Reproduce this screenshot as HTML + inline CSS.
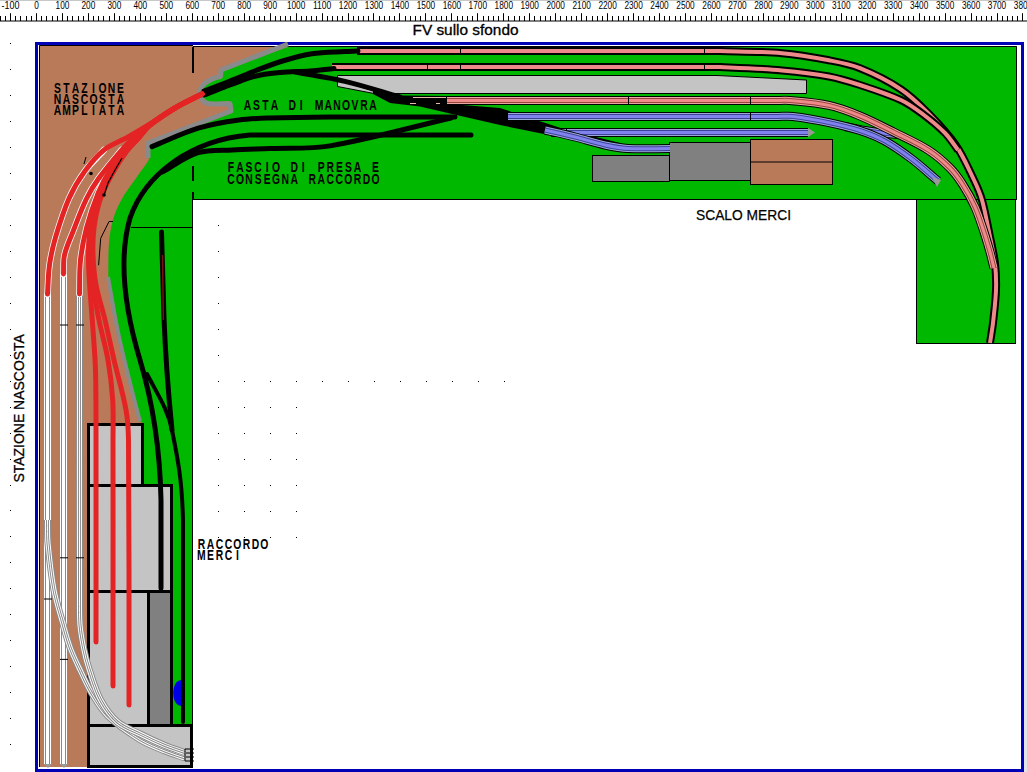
<!DOCTYPE html>
<html><head><meta charset="utf-8">
<style>
html,body{margin:0;padding:0;background:#fff;}
body{width:1027px;height:772px;overflow:hidden;position:relative;}
svg{position:absolute;left:0;top:0;}
text{font-family:"Liberation Sans",sans-serif;}
.rl{font-size:11px;fill:#000;}
.st{font-family:"Liberation Mono",monospace;font-size:13px;font-weight:bold;fill:#000;}
.fv{font-size:14px;fill:#000;}
.sc{font-size:13px;fill:#000;}
.sc2{font-size:15px;fill:#000;}
</style></head><body>
<svg width="1027" height="772" viewBox="0 0 1027 772">
<rect x="0" y="0" width="1027" height="1" fill="#c8c8c8"/>
<rect x="0" y="20.5" width="1027" height="1" fill="#000"/>
<line x1="0.5" y1="16" x2="0.5" y2="21" stroke="#000" stroke-width="1"/>
<line x1="5.5" y1="16" x2="5.5" y2="21" stroke="#000" stroke-width="1"/>
<line x1="10.5" y1="13.2" x2="10.5" y2="21" stroke="#000" stroke-width="1"/>
<text x="1.6" y="9" class="rl" textLength="17.9" lengthAdjust="spacingAndGlyphs">-100</text>
<line x1="15.5" y1="16" x2="15.5" y2="21" stroke="#000" stroke-width="1"/>
<line x1="20.5" y1="16" x2="20.5" y2="21" stroke="#000" stroke-width="1"/>
<line x1="26.5" y1="16" x2="26.5" y2="21" stroke="#000" stroke-width="1"/>
<line x1="31.5" y1="16" x2="31.5" y2="21" stroke="#000" stroke-width="1"/>
<line x1="36.5" y1="13.2" x2="36.5" y2="21" stroke="#000" stroke-width="1"/>
<text x="34.2" y="9" class="rl" textLength="4.6" lengthAdjust="spacingAndGlyphs">0</text>
<line x1="41.5" y1="16" x2="41.5" y2="21" stroke="#000" stroke-width="1"/>
<line x1="46.5" y1="16" x2="46.5" y2="21" stroke="#000" stroke-width="1"/>
<line x1="52.5" y1="16" x2="52.5" y2="21" stroke="#000" stroke-width="1"/>
<line x1="57.5" y1="16" x2="57.5" y2="21" stroke="#000" stroke-width="1"/>
<line x1="62.5" y1="13.2" x2="62.5" y2="21" stroke="#000" stroke-width="1"/>
<text x="55.6" y="9" class="rl" textLength="13.8" lengthAdjust="spacingAndGlyphs">100</text>
<line x1="67.5" y1="16" x2="67.5" y2="21" stroke="#000" stroke-width="1"/>
<line x1="72.5" y1="16" x2="72.5" y2="21" stroke="#000" stroke-width="1"/>
<line x1="78.5" y1="16" x2="78.5" y2="21" stroke="#000" stroke-width="1"/>
<line x1="83.5" y1="16" x2="83.5" y2="21" stroke="#000" stroke-width="1"/>
<line x1="88.5" y1="13.2" x2="88.5" y2="21" stroke="#000" stroke-width="1"/>
<text x="81.5" y="9" class="rl" textLength="13.8" lengthAdjust="spacingAndGlyphs">200</text>
<line x1="93.5" y1="16" x2="93.5" y2="21" stroke="#000" stroke-width="1"/>
<line x1="98.5" y1="16" x2="98.5" y2="21" stroke="#000" stroke-width="1"/>
<line x1="103.5" y1="16" x2="103.5" y2="21" stroke="#000" stroke-width="1"/>
<line x1="109.5" y1="16" x2="109.5" y2="21" stroke="#000" stroke-width="1"/>
<line x1="114.5" y1="13.2" x2="114.5" y2="21" stroke="#000" stroke-width="1"/>
<text x="107.5" y="9" class="rl" textLength="13.8" lengthAdjust="spacingAndGlyphs">300</text>
<line x1="119.5" y1="16" x2="119.5" y2="21" stroke="#000" stroke-width="1"/>
<line x1="124.5" y1="16" x2="124.5" y2="21" stroke="#000" stroke-width="1"/>
<line x1="129.5" y1="16" x2="129.5" y2="21" stroke="#000" stroke-width="1"/>
<line x1="135.5" y1="16" x2="135.5" y2="21" stroke="#000" stroke-width="1"/>
<line x1="140.5" y1="13.2" x2="140.5" y2="21" stroke="#000" stroke-width="1"/>
<text x="133.4" y="9" class="rl" textLength="13.8" lengthAdjust="spacingAndGlyphs">400</text>
<line x1="145.5" y1="16" x2="145.5" y2="21" stroke="#000" stroke-width="1"/>
<line x1="150.5" y1="16" x2="150.5" y2="21" stroke="#000" stroke-width="1"/>
<line x1="155.5" y1="16" x2="155.5" y2="21" stroke="#000" stroke-width="1"/>
<line x1="161.5" y1="16" x2="161.5" y2="21" stroke="#000" stroke-width="1"/>
<line x1="166.5" y1="13.2" x2="166.5" y2="21" stroke="#000" stroke-width="1"/>
<text x="159.4" y="9" class="rl" textLength="13.8" lengthAdjust="spacingAndGlyphs">500</text>
<line x1="171.5" y1="16" x2="171.5" y2="21" stroke="#000" stroke-width="1"/>
<line x1="176.5" y1="16" x2="176.5" y2="21" stroke="#000" stroke-width="1"/>
<line x1="181.5" y1="16" x2="181.5" y2="21" stroke="#000" stroke-width="1"/>
<line x1="187.5" y1="16" x2="187.5" y2="21" stroke="#000" stroke-width="1"/>
<line x1="192.5" y1="13.2" x2="192.5" y2="21" stroke="#000" stroke-width="1"/>
<text x="185.4" y="9" class="rl" textLength="13.8" lengthAdjust="spacingAndGlyphs">600</text>
<line x1="197.5" y1="16" x2="197.5" y2="21" stroke="#000" stroke-width="1"/>
<line x1="202.5" y1="16" x2="202.5" y2="21" stroke="#000" stroke-width="1"/>
<line x1="207.5" y1="16" x2="207.5" y2="21" stroke="#000" stroke-width="1"/>
<line x1="213.5" y1="16" x2="213.5" y2="21" stroke="#000" stroke-width="1"/>
<line x1="218.5" y1="13.2" x2="218.5" y2="21" stroke="#000" stroke-width="1"/>
<text x="211.3" y="9" class="rl" textLength="13.8" lengthAdjust="spacingAndGlyphs">700</text>
<line x1="223.5" y1="16" x2="223.5" y2="21" stroke="#000" stroke-width="1"/>
<line x1="228.5" y1="16" x2="228.5" y2="21" stroke="#000" stroke-width="1"/>
<line x1="233.5" y1="16" x2="233.5" y2="21" stroke="#000" stroke-width="1"/>
<line x1="238.5" y1="16" x2="238.5" y2="21" stroke="#000" stroke-width="1"/>
<line x1="244.5" y1="13.2" x2="244.5" y2="21" stroke="#000" stroke-width="1"/>
<text x="237.3" y="9" class="rl" textLength="13.8" lengthAdjust="spacingAndGlyphs">800</text>
<line x1="249.5" y1="16" x2="249.5" y2="21" stroke="#000" stroke-width="1"/>
<line x1="254.5" y1="16" x2="254.5" y2="21" stroke="#000" stroke-width="1"/>
<line x1="259.5" y1="16" x2="259.5" y2="21" stroke="#000" stroke-width="1"/>
<line x1="264.5" y1="16" x2="264.5" y2="21" stroke="#000" stroke-width="1"/>
<line x1="270.5" y1="13.2" x2="270.5" y2="21" stroke="#000" stroke-width="1"/>
<text x="263.2" y="9" class="rl" textLength="13.8" lengthAdjust="spacingAndGlyphs">900</text>
<line x1="275.5" y1="16" x2="275.5" y2="21" stroke="#000" stroke-width="1"/>
<line x1="280.5" y1="16" x2="280.5" y2="21" stroke="#000" stroke-width="1"/>
<line x1="285.5" y1="16" x2="285.5" y2="21" stroke="#000" stroke-width="1"/>
<line x1="290.5" y1="16" x2="290.5" y2="21" stroke="#000" stroke-width="1"/>
<line x1="296.5" y1="13.2" x2="296.5" y2="21" stroke="#000" stroke-width="1"/>
<text x="286.9" y="9" class="rl" textLength="18.4" lengthAdjust="spacingAndGlyphs">1000</text>
<line x1="301.5" y1="16" x2="301.5" y2="21" stroke="#000" stroke-width="1"/>
<line x1="306.5" y1="16" x2="306.5" y2="21" stroke="#000" stroke-width="1"/>
<line x1="311.5" y1="16" x2="311.5" y2="21" stroke="#000" stroke-width="1"/>
<line x1="316.5" y1="16" x2="316.5" y2="21" stroke="#000" stroke-width="1"/>
<line x1="322.5" y1="13.2" x2="322.5" y2="21" stroke="#000" stroke-width="1"/>
<text x="312.9" y="9" class="rl" textLength="18.4" lengthAdjust="spacingAndGlyphs">1100</text>
<line x1="327.5" y1="16" x2="327.5" y2="21" stroke="#000" stroke-width="1"/>
<line x1="332.5" y1="16" x2="332.5" y2="21" stroke="#000" stroke-width="1"/>
<line x1="337.5" y1="16" x2="337.5" y2="21" stroke="#000" stroke-width="1"/>
<line x1="342.5" y1="16" x2="342.5" y2="21" stroke="#000" stroke-width="1"/>
<line x1="348.5" y1="13.2" x2="348.5" y2="21" stroke="#000" stroke-width="1"/>
<text x="338.8" y="9" class="rl" textLength="18.4" lengthAdjust="spacingAndGlyphs">1200</text>
<line x1="353.5" y1="16" x2="353.5" y2="21" stroke="#000" stroke-width="1"/>
<line x1="358.5" y1="16" x2="358.5" y2="21" stroke="#000" stroke-width="1"/>
<line x1="363.5" y1="16" x2="363.5" y2="21" stroke="#000" stroke-width="1"/>
<line x1="368.5" y1="16" x2="368.5" y2="21" stroke="#000" stroke-width="1"/>
<line x1="373.5" y1="13.2" x2="373.5" y2="21" stroke="#000" stroke-width="1"/>
<text x="364.8" y="9" class="rl" textLength="18.4" lengthAdjust="spacingAndGlyphs">1300</text>
<line x1="379.5" y1="16" x2="379.5" y2="21" stroke="#000" stroke-width="1"/>
<line x1="384.5" y1="16" x2="384.5" y2="21" stroke="#000" stroke-width="1"/>
<line x1="389.5" y1="16" x2="389.5" y2="21" stroke="#000" stroke-width="1"/>
<line x1="394.5" y1="16" x2="394.5" y2="21" stroke="#000" stroke-width="1"/>
<line x1="399.5" y1="13.2" x2="399.5" y2="21" stroke="#000" stroke-width="1"/>
<text x="390.7" y="9" class="rl" textLength="18.4" lengthAdjust="spacingAndGlyphs">1400</text>
<line x1="405.5" y1="16" x2="405.5" y2="21" stroke="#000" stroke-width="1"/>
<line x1="410.5" y1="16" x2="410.5" y2="21" stroke="#000" stroke-width="1"/>
<line x1="415.5" y1="16" x2="415.5" y2="21" stroke="#000" stroke-width="1"/>
<line x1="420.5" y1="16" x2="420.5" y2="21" stroke="#000" stroke-width="1"/>
<line x1="425.5" y1="13.2" x2="425.5" y2="21" stroke="#000" stroke-width="1"/>
<text x="416.7" y="9" class="rl" textLength="18.4" lengthAdjust="spacingAndGlyphs">1500</text>
<line x1="431.5" y1="16" x2="431.5" y2="21" stroke="#000" stroke-width="1"/>
<line x1="436.5" y1="16" x2="436.5" y2="21" stroke="#000" stroke-width="1"/>
<line x1="441.5" y1="16" x2="441.5" y2="21" stroke="#000" stroke-width="1"/>
<line x1="446.5" y1="16" x2="446.5" y2="21" stroke="#000" stroke-width="1"/>
<line x1="451.5" y1="13.2" x2="451.5" y2="21" stroke="#000" stroke-width="1"/>
<text x="442.7" y="9" class="rl" textLength="18.4" lengthAdjust="spacingAndGlyphs">1600</text>
<line x1="457.5" y1="16" x2="457.5" y2="21" stroke="#000" stroke-width="1"/>
<line x1="462.5" y1="16" x2="462.5" y2="21" stroke="#000" stroke-width="1"/>
<line x1="467.5" y1="16" x2="467.5" y2="21" stroke="#000" stroke-width="1"/>
<line x1="472.5" y1="16" x2="472.5" y2="21" stroke="#000" stroke-width="1"/>
<line x1="477.5" y1="13.2" x2="477.5" y2="21" stroke="#000" stroke-width="1"/>
<text x="468.6" y="9" class="rl" textLength="18.4" lengthAdjust="spacingAndGlyphs">1700</text>
<line x1="483.5" y1="16" x2="483.5" y2="21" stroke="#000" stroke-width="1"/>
<line x1="488.5" y1="16" x2="488.5" y2="21" stroke="#000" stroke-width="1"/>
<line x1="493.5" y1="16" x2="493.5" y2="21" stroke="#000" stroke-width="1"/>
<line x1="498.5" y1="16" x2="498.5" y2="21" stroke="#000" stroke-width="1"/>
<line x1="503.5" y1="13.2" x2="503.5" y2="21" stroke="#000" stroke-width="1"/>
<text x="494.6" y="9" class="rl" textLength="18.4" lengthAdjust="spacingAndGlyphs">1800</text>
<line x1="508.5" y1="16" x2="508.5" y2="21" stroke="#000" stroke-width="1"/>
<line x1="514.5" y1="16" x2="514.5" y2="21" stroke="#000" stroke-width="1"/>
<line x1="519.5" y1="16" x2="519.5" y2="21" stroke="#000" stroke-width="1"/>
<line x1="524.5" y1="16" x2="524.5" y2="21" stroke="#000" stroke-width="1"/>
<line x1="529.5" y1="13.2" x2="529.5" y2="21" stroke="#000" stroke-width="1"/>
<text x="520.5" y="9" class="rl" textLength="18.4" lengthAdjust="spacingAndGlyphs">1900</text>
<line x1="534.5" y1="16" x2="534.5" y2="21" stroke="#000" stroke-width="1"/>
<line x1="540.5" y1="16" x2="540.5" y2="21" stroke="#000" stroke-width="1"/>
<line x1="545.5" y1="16" x2="545.5" y2="21" stroke="#000" stroke-width="1"/>
<line x1="550.5" y1="16" x2="550.5" y2="21" stroke="#000" stroke-width="1"/>
<line x1="555.5" y1="13.2" x2="555.5" y2="21" stroke="#000" stroke-width="1"/>
<text x="546.5" y="9" class="rl" textLength="18.4" lengthAdjust="spacingAndGlyphs">2000</text>
<line x1="560.5" y1="16" x2="560.5" y2="21" stroke="#000" stroke-width="1"/>
<line x1="566.5" y1="16" x2="566.5" y2="21" stroke="#000" stroke-width="1"/>
<line x1="571.5" y1="16" x2="571.5" y2="21" stroke="#000" stroke-width="1"/>
<line x1="576.5" y1="16" x2="576.5" y2="21" stroke="#000" stroke-width="1"/>
<line x1="581.5" y1="13.2" x2="581.5" y2="21" stroke="#000" stroke-width="1"/>
<text x="572.5" y="9" class="rl" textLength="18.4" lengthAdjust="spacingAndGlyphs">2100</text>
<line x1="586.5" y1="16" x2="586.5" y2="21" stroke="#000" stroke-width="1"/>
<line x1="592.5" y1="16" x2="592.5" y2="21" stroke="#000" stroke-width="1"/>
<line x1="597.5" y1="16" x2="597.5" y2="21" stroke="#000" stroke-width="1"/>
<line x1="602.5" y1="16" x2="602.5" y2="21" stroke="#000" stroke-width="1"/>
<line x1="607.5" y1="13.2" x2="607.5" y2="21" stroke="#000" stroke-width="1"/>
<text x="598.4" y="9" class="rl" textLength="18.4" lengthAdjust="spacingAndGlyphs">2200</text>
<line x1="612.5" y1="16" x2="612.5" y2="21" stroke="#000" stroke-width="1"/>
<line x1="618.5" y1="16" x2="618.5" y2="21" stroke="#000" stroke-width="1"/>
<line x1="623.5" y1="16" x2="623.5" y2="21" stroke="#000" stroke-width="1"/>
<line x1="628.5" y1="16" x2="628.5" y2="21" stroke="#000" stroke-width="1"/>
<line x1="633.5" y1="13.2" x2="633.5" y2="21" stroke="#000" stroke-width="1"/>
<text x="624.4" y="9" class="rl" textLength="18.4" lengthAdjust="spacingAndGlyphs">2300</text>
<line x1="638.5" y1="16" x2="638.5" y2="21" stroke="#000" stroke-width="1"/>
<line x1="643.5" y1="16" x2="643.5" y2="21" stroke="#000" stroke-width="1"/>
<line x1="649.5" y1="16" x2="649.5" y2="21" stroke="#000" stroke-width="1"/>
<line x1="654.5" y1="16" x2="654.5" y2="21" stroke="#000" stroke-width="1"/>
<line x1="659.5" y1="13.2" x2="659.5" y2="21" stroke="#000" stroke-width="1"/>
<text x="650.3" y="9" class="rl" textLength="18.4" lengthAdjust="spacingAndGlyphs">2400</text>
<line x1="664.5" y1="16" x2="664.5" y2="21" stroke="#000" stroke-width="1"/>
<line x1="669.5" y1="16" x2="669.5" y2="21" stroke="#000" stroke-width="1"/>
<line x1="675.5" y1="16" x2="675.5" y2="21" stroke="#000" stroke-width="1"/>
<line x1="680.5" y1="16" x2="680.5" y2="21" stroke="#000" stroke-width="1"/>
<line x1="685.5" y1="13.2" x2="685.5" y2="21" stroke="#000" stroke-width="1"/>
<text x="676.3" y="9" class="rl" textLength="18.4" lengthAdjust="spacingAndGlyphs">2500</text>
<line x1="690.5" y1="16" x2="690.5" y2="21" stroke="#000" stroke-width="1"/>
<line x1="695.5" y1="16" x2="695.5" y2="21" stroke="#000" stroke-width="1"/>
<line x1="701.5" y1="16" x2="701.5" y2="21" stroke="#000" stroke-width="1"/>
<line x1="706.5" y1="16" x2="706.5" y2="21" stroke="#000" stroke-width="1"/>
<line x1="711.5" y1="13.2" x2="711.5" y2="21" stroke="#000" stroke-width="1"/>
<text x="702.3" y="9" class="rl" textLength="18.4" lengthAdjust="spacingAndGlyphs">2600</text>
<line x1="716.5" y1="16" x2="716.5" y2="21" stroke="#000" stroke-width="1"/>
<line x1="721.5" y1="16" x2="721.5" y2="21" stroke="#000" stroke-width="1"/>
<line x1="727.5" y1="16" x2="727.5" y2="21" stroke="#000" stroke-width="1"/>
<line x1="732.5" y1="16" x2="732.5" y2="21" stroke="#000" stroke-width="1"/>
<line x1="737.5" y1="13.2" x2="737.5" y2="21" stroke="#000" stroke-width="1"/>
<text x="728.2" y="9" class="rl" textLength="18.4" lengthAdjust="spacingAndGlyphs">2700</text>
<line x1="742.5" y1="16" x2="742.5" y2="21" stroke="#000" stroke-width="1"/>
<line x1="747.5" y1="16" x2="747.5" y2="21" stroke="#000" stroke-width="1"/>
<line x1="752.5" y1="16" x2="752.5" y2="21" stroke="#000" stroke-width="1"/>
<line x1="758.5" y1="16" x2="758.5" y2="21" stroke="#000" stroke-width="1"/>
<line x1="763.5" y1="13.2" x2="763.5" y2="21" stroke="#000" stroke-width="1"/>
<text x="754.2" y="9" class="rl" textLength="18.4" lengthAdjust="spacingAndGlyphs">2800</text>
<line x1="768.5" y1="16" x2="768.5" y2="21" stroke="#000" stroke-width="1"/>
<line x1="773.5" y1="16" x2="773.5" y2="21" stroke="#000" stroke-width="1"/>
<line x1="778.5" y1="16" x2="778.5" y2="21" stroke="#000" stroke-width="1"/>
<line x1="784.5" y1="16" x2="784.5" y2="21" stroke="#000" stroke-width="1"/>
<line x1="789.5" y1="13.2" x2="789.5" y2="21" stroke="#000" stroke-width="1"/>
<text x="780.1" y="9" class="rl" textLength="18.4" lengthAdjust="spacingAndGlyphs">2900</text>
<line x1="794.5" y1="16" x2="794.5" y2="21" stroke="#000" stroke-width="1"/>
<line x1="799.5" y1="16" x2="799.5" y2="21" stroke="#000" stroke-width="1"/>
<line x1="804.5" y1="16" x2="804.5" y2="21" stroke="#000" stroke-width="1"/>
<line x1="810.5" y1="16" x2="810.5" y2="21" stroke="#000" stroke-width="1"/>
<line x1="815.5" y1="13.2" x2="815.5" y2="21" stroke="#000" stroke-width="1"/>
<text x="806.1" y="9" class="rl" textLength="18.4" lengthAdjust="spacingAndGlyphs">3000</text>
<line x1="820.5" y1="16" x2="820.5" y2="21" stroke="#000" stroke-width="1"/>
<line x1="825.5" y1="16" x2="825.5" y2="21" stroke="#000" stroke-width="1"/>
<line x1="830.5" y1="16" x2="830.5" y2="21" stroke="#000" stroke-width="1"/>
<line x1="836.5" y1="16" x2="836.5" y2="21" stroke="#000" stroke-width="1"/>
<line x1="841.5" y1="13.2" x2="841.5" y2="21" stroke="#000" stroke-width="1"/>
<text x="832.1" y="9" class="rl" textLength="18.4" lengthAdjust="spacingAndGlyphs">3100</text>
<line x1="846.5" y1="16" x2="846.5" y2="21" stroke="#000" stroke-width="1"/>
<line x1="851.5" y1="16" x2="851.5" y2="21" stroke="#000" stroke-width="1"/>
<line x1="856.5" y1="16" x2="856.5" y2="21" stroke="#000" stroke-width="1"/>
<line x1="862.5" y1="16" x2="862.5" y2="21" stroke="#000" stroke-width="1"/>
<line x1="867.5" y1="13.2" x2="867.5" y2="21" stroke="#000" stroke-width="1"/>
<text x="858.0" y="9" class="rl" textLength="18.4" lengthAdjust="spacingAndGlyphs">3200</text>
<line x1="872.5" y1="16" x2="872.5" y2="21" stroke="#000" stroke-width="1"/>
<line x1="877.5" y1="16" x2="877.5" y2="21" stroke="#000" stroke-width="1"/>
<line x1="882.5" y1="16" x2="882.5" y2="21" stroke="#000" stroke-width="1"/>
<line x1="887.5" y1="16" x2="887.5" y2="21" stroke="#000" stroke-width="1"/>
<line x1="893.5" y1="13.2" x2="893.5" y2="21" stroke="#000" stroke-width="1"/>
<text x="884.0" y="9" class="rl" textLength="18.4" lengthAdjust="spacingAndGlyphs">3300</text>
<line x1="898.5" y1="16" x2="898.5" y2="21" stroke="#000" stroke-width="1"/>
<line x1="903.5" y1="16" x2="903.5" y2="21" stroke="#000" stroke-width="1"/>
<line x1="908.5" y1="16" x2="908.5" y2="21" stroke="#000" stroke-width="1"/>
<line x1="913.5" y1="16" x2="913.5" y2="21" stroke="#000" stroke-width="1"/>
<line x1="919.5" y1="13.2" x2="919.5" y2="21" stroke="#000" stroke-width="1"/>
<text x="909.9" y="9" class="rl" textLength="18.4" lengthAdjust="spacingAndGlyphs">3400</text>
<line x1="924.5" y1="16" x2="924.5" y2="21" stroke="#000" stroke-width="1"/>
<line x1="929.5" y1="16" x2="929.5" y2="21" stroke="#000" stroke-width="1"/>
<line x1="934.5" y1="16" x2="934.5" y2="21" stroke="#000" stroke-width="1"/>
<line x1="939.5" y1="16" x2="939.5" y2="21" stroke="#000" stroke-width="1"/>
<line x1="945.5" y1="13.2" x2="945.5" y2="21" stroke="#000" stroke-width="1"/>
<text x="935.9" y="9" class="rl" textLength="18.4" lengthAdjust="spacingAndGlyphs">3500</text>
<line x1="950.5" y1="16" x2="950.5" y2="21" stroke="#000" stroke-width="1"/>
<line x1="955.5" y1="16" x2="955.5" y2="21" stroke="#000" stroke-width="1"/>
<line x1="960.5" y1="16" x2="960.5" y2="21" stroke="#000" stroke-width="1"/>
<line x1="965.5" y1="16" x2="965.5" y2="21" stroke="#000" stroke-width="1"/>
<line x1="971.5" y1="13.2" x2="971.5" y2="21" stroke="#000" stroke-width="1"/>
<text x="961.9" y="9" class="rl" textLength="18.4" lengthAdjust="spacingAndGlyphs">3600</text>
<line x1="976.5" y1="16" x2="976.5" y2="21" stroke="#000" stroke-width="1"/>
<line x1="981.5" y1="16" x2="981.5" y2="21" stroke="#000" stroke-width="1"/>
<line x1="986.5" y1="16" x2="986.5" y2="21" stroke="#000" stroke-width="1"/>
<line x1="991.5" y1="16" x2="991.5" y2="21" stroke="#000" stroke-width="1"/>
<line x1="997.5" y1="13.2" x2="997.5" y2="21" stroke="#000" stroke-width="1"/>
<text x="987.8" y="9" class="rl" textLength="18.4" lengthAdjust="spacingAndGlyphs">3700</text>
<line x1="1002.5" y1="16" x2="1002.5" y2="21" stroke="#000" stroke-width="1"/>
<line x1="1007.5" y1="16" x2="1007.5" y2="21" stroke="#000" stroke-width="1"/>
<line x1="1012.5" y1="16" x2="1012.5" y2="21" stroke="#000" stroke-width="1"/>
<line x1="1017.5" y1="16" x2="1017.5" y2="21" stroke="#000" stroke-width="1"/>
<line x1="1022.5" y1="13.2" x2="1022.5" y2="21" stroke="#000" stroke-width="1"/>
<text x="1013.8" y="9" class="rl" textLength="18.4" lengthAdjust="spacingAndGlyphs">3800</text>
<rect x="10" y="43" width="1" height="1" fill="#000"/>
<rect x="10" y="69" width="1" height="1" fill="#000"/>
<rect x="10" y="95" width="1" height="1" fill="#000"/>
<rect x="10" y="121" width="1" height="1" fill="#000"/>
<rect x="10" y="147" width="1" height="1" fill="#000"/>
<rect x="10" y="173" width="1" height="1" fill="#000"/>
<rect x="10" y="199" width="1" height="1" fill="#000"/>
<rect x="10" y="225" width="1" height="1" fill="#000"/>
<rect x="10" y="251" width="1" height="1" fill="#000"/>
<rect x="10" y="277" width="1" height="1" fill="#000"/>
<rect x="10" y="303" width="1" height="1" fill="#000"/>
<rect x="10" y="329" width="1" height="1" fill="#000"/>
<rect x="10" y="355" width="1" height="1" fill="#000"/>
<rect x="10" y="381" width="1" height="1" fill="#000"/>
<rect x="10" y="407" width="1" height="1" fill="#000"/>
<rect x="10" y="433" width="1" height="1" fill="#000"/>
<rect x="10" y="459" width="1" height="1" fill="#000"/>
<rect x="10" y="485" width="1" height="1" fill="#000"/>
<rect x="10" y="510" width="1" height="1" fill="#000"/>
<rect x="10" y="536" width="1" height="1" fill="#000"/>
<rect x="10" y="562" width="1" height="1" fill="#000"/>
<rect x="10" y="588" width="1" height="1" fill="#000"/>
<rect x="10" y="614" width="1" height="1" fill="#000"/>
<rect x="10" y="640" width="1" height="1" fill="#000"/>
<rect x="10" y="666" width="1" height="1" fill="#000"/>
<rect x="10" y="692" width="1" height="1" fill="#000"/>
<rect x="10" y="718" width="1" height="1" fill="#000"/>
<rect x="10" y="744" width="1" height="1" fill="#000"/>
<rect x="218" y="225" width="1" height="1" fill="#000"/>
<rect x="218" y="251" width="1" height="1" fill="#000"/>
<rect x="218" y="277" width="1" height="1" fill="#000"/>
<rect x="218" y="303" width="1" height="1" fill="#000"/>
<rect x="218" y="329" width="1" height="1" fill="#000"/>
<rect x="218" y="355" width="1" height="1" fill="#000"/>
<rect x="218" y="381" width="1" height="1" fill="#000"/>
<rect x="244" y="381" width="1" height="1" fill="#000"/>
<rect x="270" y="381" width="1" height="1" fill="#000"/>
<rect x="296" y="381" width="1" height="1" fill="#000"/>
<rect x="322" y="381" width="1" height="1" fill="#000"/>
<rect x="348" y="381" width="1" height="1" fill="#000"/>
<rect x="374" y="381" width="1" height="1" fill="#000"/>
<rect x="400" y="381" width="1" height="1" fill="#000"/>
<rect x="426" y="381" width="1" height="1" fill="#000"/>
<rect x="452" y="381" width="1" height="1" fill="#000"/>
<rect x="478" y="381" width="1" height="1" fill="#000"/>
<rect x="504" y="381" width="1" height="1" fill="#000"/>
<rect x="218" y="407" width="1" height="1" fill="#000"/>
<rect x="244" y="407" width="1" height="1" fill="#000"/>
<rect x="270" y="407" width="1" height="1" fill="#000"/>
<rect x="296" y="407" width="1" height="1" fill="#000"/>
<rect x="218" y="433" width="1" height="1" fill="#000"/>
<rect x="244" y="433" width="1" height="1" fill="#000"/>
<rect x="270" y="433" width="1" height="1" fill="#000"/>
<rect x="296" y="433" width="1" height="1" fill="#000"/>
<rect x="218" y="459" width="1" height="1" fill="#000"/>
<rect x="244" y="459" width="1" height="1" fill="#000"/>
<rect x="270" y="459" width="1" height="1" fill="#000"/>
<rect x="296" y="459" width="1" height="1" fill="#000"/>
<rect x="218" y="485" width="1" height="1" fill="#000"/>
<rect x="244" y="485" width="1" height="1" fill="#000"/>
<rect x="270" y="485" width="1" height="1" fill="#000"/>
<rect x="296" y="485" width="1" height="1" fill="#000"/>
<rect x="218" y="511" width="1" height="1" fill="#000"/>
<rect x="244" y="511" width="1" height="1" fill="#000"/>
<rect x="270" y="511" width="1" height="1" fill="#000"/>
<rect x="296" y="511" width="1" height="1" fill="#000"/>
<rect x="218" y="537" width="1" height="1" fill="#000"/>
<rect x="244" y="537" width="1" height="1" fill="#000"/>
<rect x="270" y="537" width="1" height="1" fill="#000"/>
<rect x="296" y="537" width="1" height="1" fill="#000"/>

<rect x="1024" y="560" width="3" height="212" fill="#e2e2ea"/>
<rect x="36.5" y="43.5" width="986" height="727" fill="none" stroke="#0000b4" stroke-width="3"/>
<rect x="39" y="45" width="154" height="722" fill="#b97a5a"/><path d="M39.5,767 L39.5,45.5 L193,45.5" fill="none" stroke="#000" stroke-width="1"/>
<rect x="193" y="46" width="824" height="154" fill="#00b800"/>
<path d="M193,46.5 L1016.5,46.5 L1016.5,199.5 L193,199.5" fill="none" stroke="#000" stroke-width="1"/>
<polygon points="193,47 288,47 221,70 220,77 212,78 204,82 200,90 203,99 210,103 229,101 231,111 193,125.6" fill="#b97a5a"/>
<path d="M193.0,125.6 C178.0,131.4 159.4,134.8 148.0,143.0 C144.4,145.6 147.6,153.2 148.0,158.0 C148.0,158.5 149.7,158.5 149.4,159.0 C145.9,164.9 140.9,171.1 136.7,177.2 C132.5,183.2 127.8,189.0 124.0,195.3 C120.5,201.1 117.4,207.2 115.0,213.5 C112.8,219.3 111.5,225.5 110.4,231.6 C109.3,237.6 108.9,243.6 108.6,249.7 C108.2,258.8 108.4,267.9 108.3,277.0 L120.5,343.6 L140,421.3 L143,423 L143,485 L172,485 L172,725 L192.5,725 L192.5,199 L195,199 L195,124.8 Z" fill="#00b800"/>
<path d="M108,277 C112,300 116,325 120.5,343.6 C126,368 133,395 139.9,421.3" fill="none" stroke="#8a8a8a" stroke-width="4"/>
<path d="M288,44 L221,70 L220.4,76.5 C208,79 199,86 200,94 C201,101 206,104 213,104 L230,103.7 L231,111 L148,143 L148,158" fill="none" stroke="#8a8a8a" stroke-width="5" stroke-linejoin="round"/>
<line x1="192.5" y1="199" x2="192.5" y2="725" stroke="#000" stroke-width="1"/>
<line x1="193" y1="47" x2="193" y2="73" stroke="#000" stroke-width="2"/>
<line x1="193" y1="166" x2="193" y2="181" stroke="#000" stroke-width="2"/>
<line x1="193" y1="192" x2="193" y2="199" stroke="#000" stroke-width="2"/>
<line x1="131" y1="227.5" x2="192.5" y2="227.5" stroke="#000" stroke-width="1"/>
<rect x="916.5" y="199.5" width="99" height="144" fill="#00b800" stroke="#000" stroke-width="1"/>


<polygon points="337.5,75.5 717,75.5 806.5,80 806.5,93.5 374,93.5 337.5,86.5" fill="#c4c4c4" stroke="#000" stroke-width="1"/>
<rect x="592.5" y="155.5" width="77" height="26" fill="#808080" stroke="#000" stroke-width="1"/>
<rect x="669.5" y="142.5" width="81" height="38" fill="#808080" stroke="#000" stroke-width="1"/>
<rect x="750.5" y="139.5" width="82" height="45" fill="#b97a5a" stroke="#000" stroke-width="1"/>
<line x1="750.5" y1="162" x2="832.5" y2="162" stroke="#000" stroke-width="1"/>
<rect x="88.5" y="424.5" width="54" height="61" fill="#c4c4c4" stroke="#000" stroke-width="3"/>
<rect x="88.5" y="485.5" width="83" height="106" fill="#c4c4c4" stroke="#000" stroke-width="3"/>
<rect x="88.5" y="591.5" width="60" height="134" fill="#c4c4c4" stroke="#000" stroke-width="3"/>
<rect x="148.5" y="591.5" width="23" height="134" fill="#808080" stroke="#000" stroke-width="3"/>
<rect x="88.5" y="725.5" width="103" height="41" fill="#c4c4c4" stroke="#000" stroke-width="3"/>

<polygon points="373,88 400,95.5 447,96 450,104 500,108 560,127.7 600,138 620,143 620,150 600,145.5 560,137.2 500,125 450,113.5 420,106.5 390,103 373,94" fill="#000"/><path d="M413,97.5 L446,97.5 M410,103.5 L416,103.5 M436,103.5 L440,103.5" stroke="#e8b8a8" stroke-width="1"/><path d="M357.0,51.0 C473.0,51.0 589.0,51.0 705.0,51.0 C710.0,51.0 715.0,50.9 720.0,51.0 C740.7,51.6 761.4,51.4 782.0,53.2 C797.8,54.5 813.5,57.3 829.0,60.3 C839.5,62.3 850.2,64.2 860.0,68.2 C874.1,73.9 888.2,80.9 900.9,89.3 C910.9,95.9 919.7,104.6 928.2,113.2 C937.9,123.0 947.6,133.2 955.4,144.5 C962.9,155.4 968.2,168.0 974.0,180.0 C977.1,186.5 980.0,193.1 982.0,200.0 C985.2,211.4 987.2,223.3 989.6,235.0 C991.5,244.5 993.9,254.1 995.0,263.7 C996.0,272.4 996.3,281.2 996.0,290.0 C995.6,301.0 994.2,312.0 993.0,323.0 C992.2,329.7 991.0,336.3 990.0,343.0" fill="none" stroke="#000" stroke-width="8"/><path d="M357.0,51.0 C473.0,51.0 589.0,51.0 705.0,51.0 C710.0,51.0 715.0,50.9 720.0,51.0 C740.7,51.6 761.4,51.4 782.0,53.2 C797.8,54.5 813.5,57.3 829.0,60.3 C839.5,62.3 850.2,64.2 860.0,68.2 C874.1,73.9 888.2,80.9 900.9,89.3 C910.9,95.9 919.7,104.6 928.2,113.2 C937.9,123.0 947.6,133.2 955.4,144.5 C962.9,155.4 968.2,168.0 974.0,180.0 C977.1,186.5 980.0,193.1 982.0,200.0 C985.2,211.4 987.2,223.3 989.6,235.0 C991.5,244.5 993.9,254.1 995.0,263.7 C996.0,272.4 996.3,281.2 996.0,290.0 C995.6,301.0 994.2,312.0 993.0,323.0 C992.2,329.7 991.0,336.3 990.0,343.0" fill="none" stroke="#ee8a8a" stroke-width="4"/><path d="M332.0,67.0 C456.3,67.0 580.7,67.0 705.0,67.0 C710.0,67.0 715.0,66.8 720.0,67.0 C740.7,67.9 761.4,68.6 782.0,70.4 C797.7,71.8 813.5,73.6 829.0,76.5 C839.5,78.5 849.8,81.7 860.0,85.0 C873.8,89.5 887.8,94.0 900.9,100.0 C908.4,103.5 915.3,108.5 922.0,113.5 C930.0,119.5 938.0,125.9 945.0,133.0 C950.0,138.1 953.7,144.3 958.0,150.0" fill="none" stroke="#000" stroke-width="8"/><path d="M332.0,67.0 C456.3,67.0 580.7,67.0 705.0,67.0 C710.0,67.0 715.0,66.8 720.0,67.0 C740.7,67.9 761.4,68.6 782.0,70.4 C797.7,71.8 813.5,73.6 829.0,76.5 C839.5,78.5 849.8,81.7 860.0,85.0 C873.8,89.5 887.8,94.0 900.9,100.0 C908.4,103.5 915.3,108.5 922.0,113.5 C930.0,119.5 938.0,125.9 945.0,133.0 C950.0,138.1 953.7,144.3 958.0,150.0" fill="none" stroke="#ee8a8a" stroke-width="4"/><path d="M845.0,126.5 C851.7,127.8 858.3,129.3 865.0,130.5 C870.6,131.5 876.3,132.3 882.0,133.0 C887.3,133.6 892.7,134.0 898.0,134.5" fill="none" stroke="#000" stroke-width="9"/><path d="M845.0,126.5 C851.7,127.8 858.3,129.3 865.0,130.5 C870.6,131.5 876.3,132.3 882.0,133.0 C887.3,133.6 892.7,134.0 898.0,134.5" fill="none" stroke="#98a8d8" stroke-width="7"/><path d="M845.0,126.5 C851.7,127.8 858.3,129.3 865.0,130.5 C870.6,131.5 876.3,132.3 882.0,133.0 C887.3,133.6 892.7,134.0 898.0,134.5" fill="none" stroke="#000070" stroke-width="5" stroke-opacity="0.6"/><path d="M845.0,126.5 C851.7,127.8 858.3,129.3 865.0,130.5 C870.6,131.5 876.3,132.3 882.0,133.0 C887.3,133.6 892.7,134.0 898.0,134.5" fill="none" stroke="#8282ee" stroke-width="3"/><path d="M447.0,100.5 C556.3,100.5 665.7,100.5 775.0,100.5 C780.0,100.5 785.0,100.0 790.0,100.5 C803.0,101.7 816.3,102.6 829.0,105.4 C839.6,107.7 849.9,111.7 860.0,115.9 C871.6,120.7 882.8,126.6 894.0,132.2 C905.5,137.9 917.4,143.1 928.2,150.0 C936.1,155.0 943.4,161.4 950.0,168.0 C955.0,173.0 959.2,179.0 963.0,185.0 C967.5,192.0 971.6,199.4 975.0,207.0 C978.6,215.1 981.2,223.6 984.0,232.0 C986.2,238.6 988.1,245.3 990.0,252.0 C991.5,257.3 992.7,262.7 994.0,268.0" fill="none" stroke="#000" stroke-width="9"/><path d="M447.0,100.5 C556.3,100.5 665.7,100.5 775.0,100.5 C780.0,100.5 785.0,100.0 790.0,100.5 C803.0,101.7 816.3,102.6 829.0,105.4 C839.6,107.7 849.9,111.7 860.0,115.9 C871.6,120.7 882.8,126.6 894.0,132.2 C905.5,137.9 917.4,143.1 928.2,150.0 C936.1,155.0 943.4,161.4 950.0,168.0 C955.0,173.0 959.2,179.0 963.0,185.0 C967.5,192.0 971.6,199.4 975.0,207.0 C978.6,215.1 981.2,223.6 984.0,232.0 C986.2,238.6 988.1,245.3 990.0,252.0 C991.5,257.3 992.7,262.7 994.0,268.0" fill="none" stroke="#e8a8a0" stroke-width="7"/><path d="M447.0,100.5 C556.3,100.5 665.7,100.5 775.0,100.5 C780.0,100.5 785.0,100.0 790.0,100.5 C803.0,101.7 816.3,102.6 829.0,105.4 C839.6,107.7 849.9,111.7 860.0,115.9 C871.6,120.7 882.8,126.6 894.0,132.2 C905.5,137.9 917.4,143.1 928.2,150.0 C936.1,155.0 943.4,161.4 950.0,168.0 C955.0,173.0 959.2,179.0 963.0,185.0 C967.5,192.0 971.6,199.4 975.0,207.0 C978.6,215.1 981.2,223.6 984.0,232.0 C986.2,238.6 988.1,245.3 990.0,252.0 C991.5,257.3 992.7,262.7 994.0,268.0" fill="none" stroke="#600000" stroke-width="5" stroke-opacity="0.6"/><path d="M447.0,100.5 C556.3,100.5 665.7,100.5 775.0,100.5 C780.0,100.5 785.0,100.0 790.0,100.5 C803.0,101.7 816.3,102.6 829.0,105.4 C839.6,107.7 849.9,111.7 860.0,115.9 C871.6,120.7 882.8,126.6 894.0,132.2 C905.5,137.9 917.4,143.1 928.2,150.0 C936.1,155.0 943.4,161.4 950.0,168.0 C955.0,173.0 959.2,179.0 963.0,185.0 C967.5,192.0 971.6,199.4 975.0,207.0 C978.6,215.1 981.2,223.6 984.0,232.0 C986.2,238.6 988.1,245.3 990.0,252.0 C991.5,257.3 992.7,262.7 994.0,268.0" fill="none" stroke="#ee8a8a" stroke-width="3"/><path d="M508.0,116.5 C598.0,116.5 688.0,116.5 778.0,116.5 C783.0,116.5 788.0,115.9 793.0,116.5 C805.0,117.9 817.1,120.1 829.0,122.6 C839.4,124.8 849.9,127.2 860.0,130.5 C868.6,133.3 877.1,136.7 885.0,141.0 C894.4,146.2 903.2,152.5 911.8,159.0 C920.9,165.9 929.3,173.7 938.0,181.0" fill="none" stroke="#000" stroke-width="9"/><path d="M508.0,116.5 C598.0,116.5 688.0,116.5 778.0,116.5 C783.0,116.5 788.0,115.9 793.0,116.5 C805.0,117.9 817.1,120.1 829.0,122.6 C839.4,124.8 849.9,127.2 860.0,130.5 C868.6,133.3 877.1,136.7 885.0,141.0 C894.4,146.2 903.2,152.5 911.8,159.0 C920.9,165.9 929.3,173.7 938.0,181.0" fill="none" stroke="#98a8d8" stroke-width="7"/><path d="M508.0,116.5 C598.0,116.5 688.0,116.5 778.0,116.5 C783.0,116.5 788.0,115.9 793.0,116.5 C805.0,117.9 817.1,120.1 829.0,122.6 C839.4,124.8 849.9,127.2 860.0,130.5 C868.6,133.3 877.1,136.7 885.0,141.0 C894.4,146.2 903.2,152.5 911.8,159.0 C920.9,165.9 929.3,173.7 938.0,181.0" fill="none" stroke="#000070" stroke-width="5" stroke-opacity="0.6"/><path d="M508.0,116.5 C598.0,116.5 688.0,116.5 778.0,116.5 C783.0,116.5 788.0,115.9 793.0,116.5 C805.0,117.9 817.1,120.1 829.0,122.6 C839.4,124.8 849.9,127.2 860.0,130.5 C868.6,133.3 877.1,136.7 885.0,141.0 C894.4,146.2 903.2,152.5 911.8,159.0 C920.9,165.9 929.3,173.7 938.0,181.0" fill="none" stroke="#8282ee" stroke-width="3"/><path d="M551,132.5 L808,132.5" fill="none" stroke="#000" stroke-width="9"/><path d="M551,132.5 L808,132.5" fill="none" stroke="#98a8d8" stroke-width="7"/><path d="M551,132.5 L808,132.5" fill="none" stroke="#000070" stroke-width="5" stroke-opacity="0.6"/><path d="M551,132.5 L808,132.5" fill="none" stroke="#8282ee" stroke-width="3"/><polygon points="808,128 815,132.5 808,137" fill="#999"/><polygon points="932,177 941,180 937,187" fill="#999"/><line x1="460.5" y1="47.0" x2="460.5" y2="55.0" stroke="#000" stroke-width="1"/><line x1="704.5" y1="47.0" x2="704.5" y2="55.0" stroke="#000" stroke-width="1"/><line x1="427.5" y1="63.0" x2="427.5" y2="71.0" stroke="#000" stroke-width="1"/><line x1="460.5" y1="63.0" x2="460.5" y2="71.0" stroke="#000" stroke-width="1"/><line x1="704.5" y1="63.0" x2="704.5" y2="71.0" stroke="#000" stroke-width="1"/><line x1="628.5" y1="96.0" x2="628.5" y2="105.0" stroke="#000" stroke-width="1"/><line x1="750.5" y1="96.0" x2="750.5" y2="105.0" stroke="#000" stroke-width="1"/><line x1="750.5" y1="112.0" x2="750.5" y2="121.0" stroke="#000" stroke-width="1"/><line x1="566.5" y1="128.0" x2="566.5" y2="137.0" stroke="#000" stroke-width="1"/><line x1="626.5" y1="144.0" x2="626.5" y2="153.0" stroke="#000" stroke-width="1"/><path d="M545.0,130.0 C555.0,132.3 565.0,134.5 575.0,137.0 C585.0,139.5 594.9,142.8 605.0,145.0 C612.6,146.6 620.3,148.1 628.0,148.5 C641.9,149.3 656.0,148.5 670.0,148.5" fill="none" stroke="#000" stroke-width="9"/><path d="M545.0,130.0 C555.0,132.3 565.0,134.5 575.0,137.0 C585.0,139.5 594.9,142.8 605.0,145.0 C612.6,146.6 620.3,148.1 628.0,148.5 C641.9,149.3 656.0,148.5 670.0,148.5" fill="none" stroke="#98a8d8" stroke-width="7"/><path d="M545.0,130.0 C555.0,132.3 565.0,134.5 575.0,137.0 C585.0,139.5 594.9,142.8 605.0,145.0 C612.6,146.6 620.3,148.1 628.0,148.5 C641.9,149.3 656.0,148.5 670.0,148.5" fill="none" stroke="#000070" stroke-width="5" stroke-opacity="0.6"/><path d="M545.0,130.0 C555.0,132.3 565.0,134.5 575.0,137.0 C585.0,139.5 594.9,142.8 605.0,145.0 C612.6,146.6 620.3,148.1 628.0,148.5 C641.9,149.3 656.0,148.5 670.0,148.5" fill="none" stroke="#8282ee" stroke-width="3"/><path d="M204.0,91.0 C212.7,87.7 221.4,84.4 230.0,81.0 C238.7,77.6 247.3,73.8 256.0,70.5 C264.8,67.2 273.6,63.7 282.6,61.0 C292.2,58.1 301.9,55.2 311.8,53.7 C322.7,52.0 333.9,52.1 345.0,51.5 C349.3,51.2 353.7,51.2 358.0,51.0" fill="none" stroke="#000" stroke-width="5" stroke-linecap="round" stroke-linejoin="round"/><path d="M204.0,95.0 C212.7,91.7 221.3,88.2 230.0,85.0 C238.6,81.9 247.1,78.2 256.0,76.0 C263.8,74.0 272.0,73.2 280.0,72.5 C290.0,71.6 300.0,71.7 310.0,71.0 C318.0,70.4 326.0,69.3 334.0,68.5" fill="none" stroke="#000" stroke-width="5" stroke-linecap="round" stroke-linejoin="round"/><path d="M295.0,72.0 C311.7,75.1 328.5,77.5 345.0,81.4 C363.5,85.8 381.7,91.8 400.0,97.0" fill="none" stroke="#000" stroke-width="5" stroke-linecap="round" stroke-linejoin="round"/><path d="M152.0,146.6 C167.4,140.5 182.4,133.0 198.2,128.2 C211.4,124.2 225.3,121.9 239.0,120.0 C249.2,118.5 259.7,118.3 270.0,118.0 C290.0,117.3 310.0,117.1 330.0,117.0 C371.7,116.8 413.3,117.0 455.0,117.0" fill="none" stroke="#000" stroke-width="5" stroke-linecap="round" stroke-linejoin="round"/><path d="M161,588 L161,500 C160,450 152,400 140,360 C125,310 118,260 130,218 C145,175 190,140 250,135 L471,135" fill="none" stroke="#000" stroke-width="5" stroke-linecap="round" stroke-linejoin="round"/><path d="M162.7,171.8 C174.5,165.4 185.5,156.6 198.0,152.7 C208.7,149.4 220.8,150.6 232.2,150.0 C244.8,149.3 257.4,149.1 270.0,148.6 C290.0,147.8 310.3,149.2 330.0,145.9 C370.7,139.0 410.7,127.3 451.0,118.0" fill="none" stroke="#000" stroke-width="5" stroke-linecap="round" stroke-linejoin="round"/><path d="M147,374 C158,395 168,410 172,430 C178,460 182,480 183,520 L183,722" fill="none" stroke="#000" stroke-width="4" stroke-linecap="round" stroke-linejoin="round"/><path d="M161.5,232 L164,318 C166,370 170,410 172,430" fill="none" stroke="#000" stroke-width="5" stroke-linecap="round" stroke-linejoin="round"/><path d="M47.5,294 L47.5,764" fill="none" stroke="#8a8a8a" stroke-width="9"/><path d="M47.5,294 L47.5,764" fill="none" stroke="#fff" stroke-width="7"/><path d="M47.5,294 L47.5,764" fill="none" stroke="#8a8a8a" stroke-width="5"/><path d="M47.5,294 L47.5,764" fill="none" stroke="#fff" stroke-width="3"/><path d="M63.5,274 L63.5,764" fill="none" stroke="#8a8a8a" stroke-width="9"/><path d="M63.5,274 L63.5,764" fill="none" stroke="#fff" stroke-width="7"/><path d="M63.5,274 L63.5,764" fill="none" stroke="#8a8a8a" stroke-width="5"/><path d="M63.5,274 L63.5,764" fill="none" stroke="#fff" stroke-width="3"/><path d="M47.5,520.0 C47.7,527.7 47.3,535.4 48.0,543.0 C49.5,558.7 51.1,574.5 54.0,590.0 C56.2,601.8 60.0,613.4 63.3,625.0 C65.5,632.7 67.5,640.5 70.3,648.0 C73.3,656.0 77.1,663.7 80.8,671.5 C84.1,678.6 87.2,685.8 91.3,692.5 C96.3,700.7 101.2,709.4 108.0,716.0 C117.4,725.1 128.8,732.6 140.0,739.5 C147.8,744.3 156.5,747.5 165.0,751.0 C171.5,753.7 178.3,755.7 185.0,758.0" fill="none" stroke="#8a8a8a" stroke-width="7"/><path d="M47.5,520.0 C47.7,527.7 47.3,535.4 48.0,543.0 C49.5,558.7 51.1,574.5 54.0,590.0 C56.2,601.8 60.0,613.4 63.3,625.0 C65.5,632.7 67.5,640.5 70.3,648.0 C73.3,656.0 77.1,663.7 80.8,671.5 C84.1,678.6 87.2,685.8 91.3,692.5 C96.3,700.7 101.2,709.4 108.0,716.0 C117.4,725.1 128.8,732.6 140.0,739.5 C147.8,744.3 156.5,747.5 165.0,751.0 C171.5,753.7 178.3,755.7 185.0,758.0" fill="none" stroke="#fff" stroke-width="5"/><path d="M47.5,520.0 C47.7,527.7 47.3,535.4 48.0,543.0 C49.5,558.7 51.1,574.5 54.0,590.0 C56.2,601.8 60.0,613.4 63.3,625.0 C65.5,632.7 67.5,640.5 70.3,648.0 C73.3,656.0 77.1,663.7 80.8,671.5 C84.1,678.6 87.2,685.8 91.3,692.5 C96.3,700.7 101.2,709.4 108.0,716.0 C117.4,725.1 128.8,732.6 140.0,739.5 C147.8,744.3 156.5,747.5 165.0,751.0 C171.5,753.7 178.3,755.7 185.0,758.0" fill="none" stroke="#8a8a8a" stroke-width="3"/><path d="M47.5,520.0 C47.7,527.7 47.3,535.4 48.0,543.0 C49.5,558.7 51.1,574.5 54.0,590.0 C56.2,601.8 60.0,613.4 63.3,625.0 C65.5,632.7 67.5,640.5 70.3,648.0 C73.3,656.0 77.1,663.7 80.8,671.5 C84.1,678.6 87.2,685.8 91.3,692.5 C96.3,700.7 101.2,709.4 108.0,716.0 C117.4,725.1 128.8,732.6 140.0,739.5 C147.8,744.3 156.5,747.5 165.0,751.0 C171.5,753.7 178.3,755.7 185.0,758.0" fill="none" stroke="#fff" stroke-width="1"/><path d="M79.5,294.0 C79.5,396.0 79.3,498.0 79.5,600.0 C79.5,608.3 79.3,616.7 80.0,625.0 C80.8,633.4 82.3,641.7 84.0,650.0 C85.3,656.4 86.9,662.8 89.0,669.0 C92.5,679.5 95.4,690.4 100.6,700.0 C104.9,708.0 110.6,716.1 117.4,722.0 C123.7,727.4 132.4,730.2 140.0,734.0 C148.2,738.1 156.5,742.0 165.0,745.5 C171.5,748.2 178.3,750.2 185.0,752.5" fill="none" stroke="#8a8a8a" stroke-width="7"/><path d="M79.5,294.0 C79.5,396.0 79.3,498.0 79.5,600.0 C79.5,608.3 79.3,616.7 80.0,625.0 C80.8,633.4 82.3,641.7 84.0,650.0 C85.3,656.4 86.9,662.8 89.0,669.0 C92.5,679.5 95.4,690.4 100.6,700.0 C104.9,708.0 110.6,716.1 117.4,722.0 C123.7,727.4 132.4,730.2 140.0,734.0 C148.2,738.1 156.5,742.0 165.0,745.5 C171.5,748.2 178.3,750.2 185.0,752.5" fill="none" stroke="#fff" stroke-width="5"/><path d="M79.5,294.0 C79.5,396.0 79.3,498.0 79.5,600.0 C79.5,608.3 79.3,616.7 80.0,625.0 C80.8,633.4 82.3,641.7 84.0,650.0 C85.3,656.4 86.9,662.8 89.0,669.0 C92.5,679.5 95.4,690.4 100.6,700.0 C104.9,708.0 110.6,716.1 117.4,722.0 C123.7,727.4 132.4,730.2 140.0,734.0 C148.2,738.1 156.5,742.0 165.0,745.5 C171.5,748.2 178.3,750.2 185.0,752.5" fill="none" stroke="#8a8a8a" stroke-width="3"/><path d="M79.5,294.0 C79.5,396.0 79.3,498.0 79.5,600.0 C79.5,608.3 79.3,616.7 80.0,625.0 C80.8,633.4 82.3,641.7 84.0,650.0 C85.3,656.4 86.9,662.8 89.0,669.0 C92.5,679.5 95.4,690.4 100.6,700.0 C104.9,708.0 110.6,716.1 117.4,722.0 C123.7,727.4 132.4,730.2 140.0,734.0 C148.2,738.1 156.5,742.0 165.0,745.5 C171.5,748.2 178.3,750.2 185.0,752.5" fill="none" stroke="#fff" stroke-width="1"/><path d="M194,749 L185,749 L185,761 L194,761 M186,753 L194,753 M186,757 L194,757" fill="none" stroke="#000" stroke-width="1"/><line x1="60" y1="325" x2="68" y2="325" stroke="#000" stroke-width="1"/><line x1="76" y1="325" x2="84" y2="325" stroke="#000" stroke-width="1"/><line x1="60" y1="557.8" x2="68" y2="557.8" stroke="#000" stroke-width="1"/><line x1="76" y1="557.8" x2="84" y2="557.8" stroke="#000" stroke-width="1"/><line x1="44" y1="599" x2="52" y2="599" stroke="#000" stroke-width="1"/><line x1="60" y1="659.4" x2="68" y2="659.4" stroke="#000" stroke-width="1"/><polygon points="44,764 52,764 48,768" fill="#999"/><polygon points="60,764 68,764 64,768" fill="#999"/><path d="M113,221.5 L109,221.5 L100.7,238.3 L98.6,265.2" fill="none" stroke="#000" stroke-width="1"/><path d="M104.0,150.0 C97.6,157.1 90.3,163.7 84.7,171.4 C78.6,179.8 73.2,189.0 69.0,198.5 C63.5,211.0 59.4,224.3 55.5,237.4 C52.9,246.4 50.8,255.7 49.5,265.0 C48.1,274.6 48.2,284.3 47.5,294.0" fill="none" stroke="#ffffff" stroke-width="6.5" stroke-linecap="round" stroke-linejoin="round"/><path d="M121.6,150.0 C113.8,159.7 105.5,169.0 98.3,179.0 C93.9,185.1 89.9,191.7 86.6,198.5 C81.4,209.2 77.3,220.5 73.0,231.6 C70.0,239.3 66.3,247.0 64.5,255.0 C63.1,261.1 63.8,267.7 63.5,274.0" fill="none" stroke="#ffffff" stroke-width="6.5" stroke-linecap="round" stroke-linejoin="round"/><path d="M125.4,150.0 C120.3,156.7 114.5,162.9 110.0,170.0 C105.5,177.2 101.5,184.8 98.3,192.7 C93.7,204.1 89.7,215.8 86.6,227.7 C83.8,238.3 81.7,249.1 80.5,260.0 C79.3,271.2 79.8,282.7 79.5,294.0" fill="none" stroke="#ffffff" stroke-width="6.5" stroke-linecap="round" stroke-linejoin="round"/><path d="M202.0,94.0 C193.0,98.7 183.8,102.9 175.0,108.0 C166.4,112.9 158.4,118.8 150.0,124.0 C142.8,128.5 135.4,132.8 128.0,137.0 C120.1,141.5 111.0,144.4 104.0,150.0 C96.6,155.9 90.3,163.7 84.7,171.4 C78.6,179.8 73.2,189.0 69.0,198.5 C63.5,211.0 59.4,224.3 55.5,237.4 C52.9,246.4 50.8,255.7 49.5,265.0 C48.1,274.6 48.2,284.3 47.5,294.0" fill="none" stroke="#e42424" stroke-width="5" stroke-linecap="round" stroke-linejoin="round"/><path d="M202.0,94.0 C193.0,98.7 183.7,102.8 175.0,108.0 C166.4,113.2 158.2,119.2 150.0,125.0 C144.9,128.7 139.7,132.3 135.0,136.5 C130.3,140.7 125.7,145.2 121.6,150.0 C113.5,159.4 105.5,169.0 98.3,179.0 C93.9,185.1 89.9,191.7 86.6,198.5 C81.4,209.2 77.3,220.5 73.0,231.6 C70.0,239.3 66.3,247.0 64.5,255.0 C63.1,261.1 63.8,267.7 63.5,274.0" fill="none" stroke="#e42424" stroke-width="5" stroke-linecap="round" stroke-linejoin="round"/><path d="M202.0,94.0 C193.0,98.7 183.7,102.8 175.0,108.0 C166.4,113.2 157.9,118.8 150.0,125.0 C145.3,128.7 141.2,133.2 137.0,137.5 C133.0,141.6 129.0,145.6 125.4,150.0 C120.0,156.5 114.5,162.9 110.0,170.0 C105.5,177.2 101.5,184.8 98.3,192.7 C93.7,204.1 89.7,215.8 86.6,227.7 C83.8,238.3 81.7,249.1 80.5,260.0 C79.3,271.2 79.8,282.7 79.5,294.0" fill="none" stroke="#e42424" stroke-width="5" stroke-linecap="round" stroke-linejoin="round"/><path d="M202.0,94.0 C193.0,98.7 183.7,102.8 175.0,108.0 C166.4,113.2 157.7,118.6 150.0,125.0 C145.6,128.6 142.4,133.7 138.5,138.0 C134.8,142.0 130.9,145.8 127.4,150.0 C121.4,157.2 115.1,164.2 110.0,172.0 C105.3,179.2 100.9,186.9 98.0,195.0 C94.3,205.3 91.6,216.2 90.0,227.0 C88.4,237.8 88.5,249.0 88.5,260.0 C88.5,270.0 89.4,280.0 90.0,290.0 C90.9,303.3 92.1,316.7 93.0,330.0 C93.9,343.3 95.1,356.7 95.5,370.0 C96.1,393.3 96.0,416.7 96.0,440.0 C96.1,507.3 96.0,574.7 96.0,642.0" fill="none" stroke="#e42424" stroke-width="5" stroke-linecap="round" stroke-linejoin="round"/><path d="M202.0,94.0 C193.0,98.7 183.7,102.8 175.0,108.0 C166.4,113.2 157.7,118.6 150.0,125.0 C145.6,128.6 142.4,133.7 138.5,138.0 C134.8,142.0 130.8,145.7 127.4,150.0 C121.3,157.7 115.0,165.5 110.0,174.0 C105.5,181.5 101.9,189.7 99.0,198.0 C95.9,206.7 93.6,215.9 92.0,225.0 C90.6,233.2 90.0,241.7 90.0,250.0 C90.0,260.0 90.7,270.1 92.0,280.0 C93.7,293.4 96.3,306.7 99.0,320.0 C101.7,333.4 105.7,346.5 108.0,360.0 C110.3,373.2 111.9,386.6 112.7,400.0 C113.5,413.3 113.0,426.7 113.0,440.0 C113.1,522.0 113.0,604.0 113.0,686.0" fill="none" stroke="#e42424" stroke-width="5" stroke-linecap="round" stroke-linejoin="round"/><path d="M202.0,94.0 C193.0,98.7 183.7,102.8 175.0,108.0 C166.4,113.2 157.7,118.6 150.0,125.0 C145.6,128.6 142.4,133.7 138.5,138.0 C134.8,142.0 130.6,145.6 127.4,150.0 C121.4,158.3 115.9,167.0 111.0,176.0 C106.8,183.7 102.7,191.7 100.0,200.0 C97.1,209.0 95.2,218.6 94.0,228.0 C92.9,236.9 92.7,246.0 93.0,255.0 C93.4,265.0 94.2,275.1 96.0,285.0 C98.2,296.8 102.2,308.3 105.0,320.0 C108.2,333.3 110.9,346.7 114.0,360.0 C117.9,376.7 123.0,393.2 126.0,410.0 C127.8,419.8 128.4,430.0 128.5,440.0 C129.4,528.3 128.8,616.7 129.0,705.0" fill="none" stroke="#e42424" stroke-width="5" stroke-linecap="round" stroke-linejoin="round"/><path d="M122,158 L115,170 L108,183 L104.5,194" fill="none" stroke="#000" stroke-width="1.2"/><circle cx="104" cy="195" r="1.8" fill="#000"/><circle cx="91" cy="173.5" r="1.8" fill="#000"/><path d="M86,157 L84,164" stroke="#000" stroke-width="1"/><path d="M162.5,255 L163.3,320" stroke="#7a1010" stroke-width="1.5"/><path d="M181,680.2 C176,680.2 173.3,686 173.3,693 C173.3,700 176,705.8 181,705.8 Z" fill="#0000e6"/>
<g transform="translate(0,92.8) scale(0.74,1)"><text x="77.70 89.86 102.03 114.19 126.35 138.51 150.68 162.84" y="0" font-family="Liberation Sans" font-weight="bold" font-size="14.0" text-anchor="middle">STAZIONE</text></g><g transform="translate(0,103.7) scale(0.74,1)"><text x="77.70 89.86 102.03 114.19 126.35 138.51 150.68 162.84" y="0" font-family="Liberation Sans" font-weight="bold" font-size="14.0" text-anchor="middle">NASCOSTA</text></g><g transform="translate(0,114.6) scale(0.74,1)"><text x="77.70 89.86 102.03 114.19 126.35 138.51 150.68 162.84" y="0" font-family="Liberation Sans" font-weight="bold" font-size="14.0" text-anchor="middle">AMPLIATA</text></g><g transform="translate(0,110) scale(0.74,1)"><text x="334.46 346.57 358.68 370.78 382.89 395.00 407.11 419.22 431.32 443.43 455.54 467.65 479.76 491.86 503.97" y="0" font-family="Liberation Sans" font-weight="bold" font-size="14.0" text-anchor="middle">ASTA DI MANOVRA</text></g><g transform="translate(0,172) scale(0.74,1)"><text x="312.16 324.36 336.57 348.77 360.97 373.18 385.38 397.58 409.78 421.99 434.19 446.39 458.59 470.80 483.00 495.20 507.41" y="0" font-family="Liberation Sans" font-weight="bold" font-size="14.0" text-anchor="middle">FASCIO DI PRESA E</text></g><g transform="translate(0,183.5) scale(0.74,1)"><text x="312.16 324.36 336.57 348.77 360.97 373.18 385.38 397.58 409.78 421.99 434.19 446.39 458.59 470.80 483.00 495.20 507.41" y="0" font-family="Liberation Sans" font-weight="bold" font-size="14.0" text-anchor="middle">CONSEGNA RACCORDO</text></g><g transform="translate(0,548.6) scale(0.74,1)"><text x="272.16 284.32 296.49 308.65 320.81 332.97 345.14 357.30" y="0" font-family="Liberation Sans" font-weight="bold" font-size="14.0" text-anchor="middle">RACCORDO</text></g><g transform="translate(0,559.8) scale(0.74,1)"><text x="272.16 284.32 296.49 308.65 320.81" y="0" font-family="Liberation Sans" font-weight="bold" font-size="14.0" text-anchor="middle">MERCI</text></g>
<text x="412.5" y="34.5" font-size="14" textLength="106" lengthAdjust="spacingAndGlyphs" stroke="#000" stroke-width="0.3">FV sullo sfondo</text>
<text x="696" y="219.6" font-size="14" textLength="95" lengthAdjust="spacingAndGlyphs" stroke="#000" stroke-width="0.25">SCALO MERCI</text>
<text x="0" y="0" font-size="15" transform="translate(24,482.6) rotate(-90)" textLength="148.5" lengthAdjust="spacingAndGlyphs" stroke="#000" stroke-width="0.3">STAZIONE NASCOSTA</text>

</svg>
</body></html>
